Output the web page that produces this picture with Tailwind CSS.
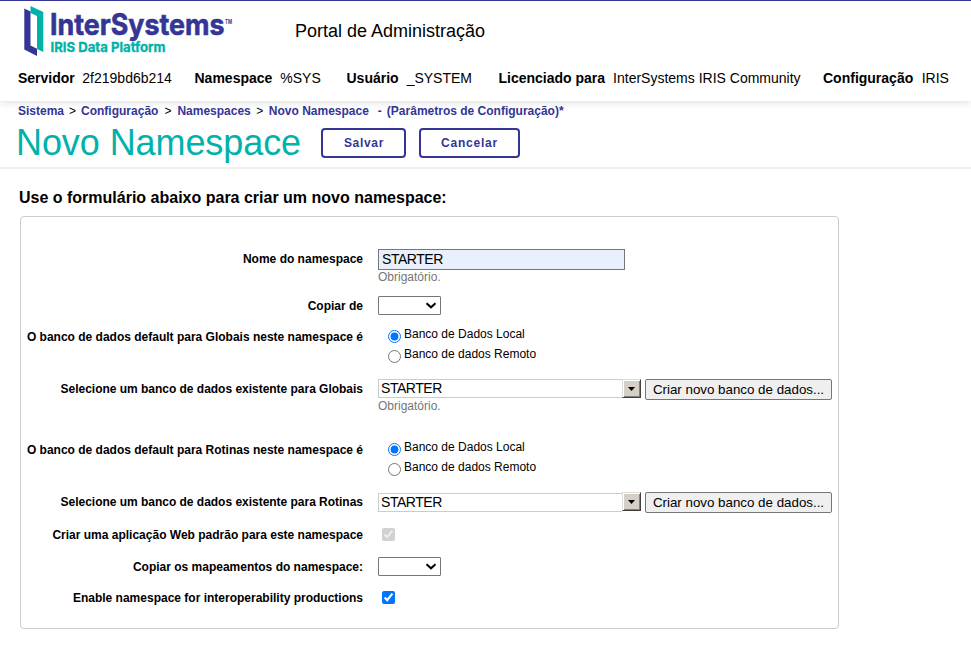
<!DOCTYPE html>
<html lang="pt-BR">
<head>
<meta charset="utf-8">
<title>Novo Namespace</title>
<script src="https://cdn.jsdelivr.net/npm/@tailwindcss/browser@4"></script>
</head>
<body class="h-[653px] overflow-hidden bg-white font-['Liberation_Sans',Arial,sans-serif] text-xs text-black">
<header class="relative h-[101px] border-t border-[#333695] bg-white shadow-[0_1px_8px_rgba(0,0,0,0.15)]">
  <div class="flex h-[57px] items-center">
    <svg class="ml-[20px] shrink-0 overflow-visible" width="220" height="57" viewBox="20 1 220 57" aria-label="InterSystems IRIS Data Platform">
      <path fill="#00b2a9" d="M30.500 6 43.300 12V52L37 49V16L30.500 13Z"/>
      <path fill="#333695" d="M24.300 8.500 30.500 11.500V45.500L37 48.700V56L24.300 49.500Z"/>
      <text x="50" y="34.500" font-family="Inter" font-weight="700" font-size="29.500" textLength="174.500" lengthAdjust="spacingAndGlyphs" fill="#333695" stroke="#333695" stroke-width=".6">InterSystems</text>
      <text x="225" y="23.500" font-family="Inter" font-weight="700" font-size="5.500" textLength="7" lengthAdjust="spacingAndGlyphs" fill="#333695">TM</text>
      <text x="50.500" y="52" font-family="Inter" font-weight="700" font-size="13.500" textLength="115" lengthAdjust="spacingAndGlyphs" fill="#00b2a9" stroke="#00b2a9" stroke-width=".3">IRIS Data Platform</text>
    </svg>
    <div class="ml-[55px] mt-[3px] whitespace-nowrap text-lg">Portal de Administração</div>
  </div>
  <div class="flex h-10 items-center pl-[18px] whitespace-nowrap text-sm">
    <div class="w-[176.500px]"><b>Servidor</b><span class="ml-[7.500px]">2f219bd6b214</span></div>
    <div class="w-[152px]"><b>Namespace</b><span class="ml-2">%SYS</span></div>
    <div class="w-[152px]"><b>Usuário</b><span class="ml-2">_SYSTEM</span></div>
    <div class="w-[324.500px]"><b>Licenciado para</b><span class="ml-2">InterSystems IRIS Community</span></div>
    <div><b>Configuração</b><span class="ml-[8.500px]">IRIS</span></div>
  </div>
</header>
<section class="h-[68px] border-b-2 border-[#eee]">
  <nav class="flex h-5 items-center pl-[18px] whitespace-nowrap font-bold text-[#333695]">
    <a>Sistema</a><span class="mx-[5px] font-normal text-black">&gt;</span><a>Configuração</a><span class="mx-[6px] font-normal text-black">&gt;</span><a>Namespaces</a><span class="mx-[5.500px] font-normal text-black">&gt;</span><a>Novo Namespace</a><span class="ml-[9px] mr-[5px]">-</span><span>(Parâmetros de Configuração)*</span>
  </nav>
  <div class="flex items-start pl-4">
    <h1 class="mt-px w-[305px] whitespace-nowrap text-4xl leading-[42px] tracking-[-0.08px] text-[#00b2a9]">Novo Namespace</h1>
    <button class="mt-[7px] h-[30px] w-[85px] rounded-[4px] border-2 border-[#333695] bg-white pl-px font-bold tracking-[0.7px] text-[#333695]">Salvar</button>
    <button class="mt-[7px] ml-[13px] h-[30px] w-[101px] rounded-[4px] border-2 border-[#333695] bg-white font-bold tracking-[0.8px] text-[#333695]">Cancelar</button>
  </div>
</section>
<main class="pl-5">
  <h2 class="-ml-px h-[47px] pt-[17px] text-base leading-6 font-bold">Use o formulário abaixo para criar um novo namespace:</h2>
  <form class="h-[413px] w-[819px] rounded border border-[#ccc] pt-8 whitespace-nowrap leading-5">
    <div class="flex h-[47px] items-start gap-[15px]">
      <label class="w-[342px] text-right font-bold">Nome do namespace</label>
      <div>
        <input class="block h-[21px] w-[247px] border border-[#767676] bg-[#e8f0fe] px-[3px] pb-[2px] text-sm tracking-[-0.45px]" value="STARTER">
        <p class="leading-[15px] text-[#767676]">Obrigatório.</p>
      </div>
    </div>
    <div class="flex h-[31px] items-start gap-[15px]">
      <label class="w-[342px] text-right font-bold">Copiar de</label>
      <div class="flex h-[19px] w-[63px] items-center justify-end rounded-[1px] border border-[#767676] pr-[3px]">
        <svg width="12" height="8" viewBox="0 0 12 8" fill="none" stroke="#000" stroke-width="2"><path d="M1.500 1.200 6 5.300 10.500 1.200"/></svg>
      </div>
    </div>
    <div class="flex h-[52px] items-start gap-[15px]">
      <label class="w-[342px] text-right font-bold">O banco de dados default para Globais neste namespace é</label>
      <div class="-mt-[3px] pl-[10px]">
        <label class="flex h-5 items-start gap-[3px]"><input type="radio" name="globais" checked class="mt-[6px] size-[13px]">Banco de Dados Local</label>
        <label class="flex h-5 items-start gap-[3px]"><input type="radio" name="globais" class="mt-[6px] size-[13px]">Banco de dados Remoto</label>
      </div>
    </div>
    <div class="flex h-[61px] items-start gap-[15px]">
      <label class="w-[342px] text-right font-bold tracking-[-0.02px]">Selecione um banco de dados existente para Globais</label>
      <div>
        <div class="flex items-start">
          <input class="h-[19px] w-[244px] border border-r-0 border-[#ccc] px-[2px] pb-[2px] text-sm tracking-[-0.45px]" value="STARTER">
          <span class="flex h-[19px] w-[19px] items-center justify-center border border-t-[#e0ddd8] border-l-[#e0ddd8] border-r-[#404040] border-b-[#404040] bg-[#d4d0c8] shadow-[inset_1px_1px_#fff,inset_-1px_-1px_#808080]"><svg width="7" height="4" viewBox="0 0 7 4"><path d="M0 0H7L3.500 4Z"/></svg></span>
          <button class="ml-1 h-[21px] w-[187px] rounded-[2px] border border-[#767676] bg-[#efefef] text-[13.333px] leading-[19px]">Criar novo banco de dados...</button>
        </div>
        <p class="-mt-px leading-[15px] text-[#767676]">Obrigatório.</p>
      </div>
    </div>
    <div class="flex h-[52px] items-start gap-[15px]">
      <label class="w-[342px] text-right font-bold">O banco de dados default para Rotinas neste namespace é</label>
      <div class="-mt-[3px] pl-[10px]">
        <label class="flex h-5 items-start gap-[3px]"><input type="radio" name="rotinas" checked class="mt-[6px] size-[13px]">Banco de Dados Local</label>
        <label class="flex h-5 items-start gap-[3px]"><input type="radio" name="rotinas" class="mt-[6px] size-[13px]">Banco de dados Remoto</label>
      </div>
    </div>
    <div class="flex h-[33px] items-start gap-[15px]">
      <label class="w-[342px] text-right font-bold tracking-[-0.02px]">Selecione um banco de dados existente para Rotinas</label>
      <div class="flex items-start">
        <input class="mt-px h-[19px] w-[244px] border border-r-0 border-[#ccc] px-[2px] pb-[2px] text-sm tracking-[-0.45px]" value="STARTER">
        <span class="flex h-[19px] w-[19px] items-center justify-center border border-t-[#e0ddd8] border-l-[#e0ddd8] border-r-[#404040] border-b-[#404040] bg-[#d4d0c8] shadow-[inset_1px_1px_#fff,inset_-1px_-1px_#808080]"><svg width="7" height="4" viewBox="0 0 7 4"><path d="M0 0H7L3.500 4Z"/></svg></span>
        <button class="ml-1 h-[21px] w-[187px] rounded-[2px] border border-[#767676] bg-[#efefef] text-[13.333px] leading-[19px]">Criar novo banco de dados...</button>
      </div>
    </div>
    <div class="flex h-8 items-start gap-[15px]">
      <label class="w-[342px] text-right font-bold">Criar uma aplicação Web padrão para este namespace</label>
      <input type="checkbox" checked disabled class="mt-[3px] ml-1 size-[13px]">
    </div>
    <div class="flex h-[31px] items-start gap-[15px]">
      <label class="w-[342px] text-right font-bold">Copiar os mapeamentos do namespace:</label>
      <div class="flex h-[19px] w-[63px] items-center justify-end rounded-[1px] border border-[#767676] pr-[3px]">
        <svg width="12" height="8" viewBox="0 0 12 8" fill="none" stroke="#000" stroke-width="2"><path d="M1.500 1.200 6 5.300 10.500 1.200"/></svg>
      </div>
    </div>
    <div class="flex h-5 items-start gap-[15px]">
      <label class="w-[342px] text-right font-bold">Enable namespace for interoperability productions</label>
      <input type="checkbox" checked class="mt-[3px] ml-1 size-[13px]">
    </div>
  </form>
</main>
</body>
</html>
